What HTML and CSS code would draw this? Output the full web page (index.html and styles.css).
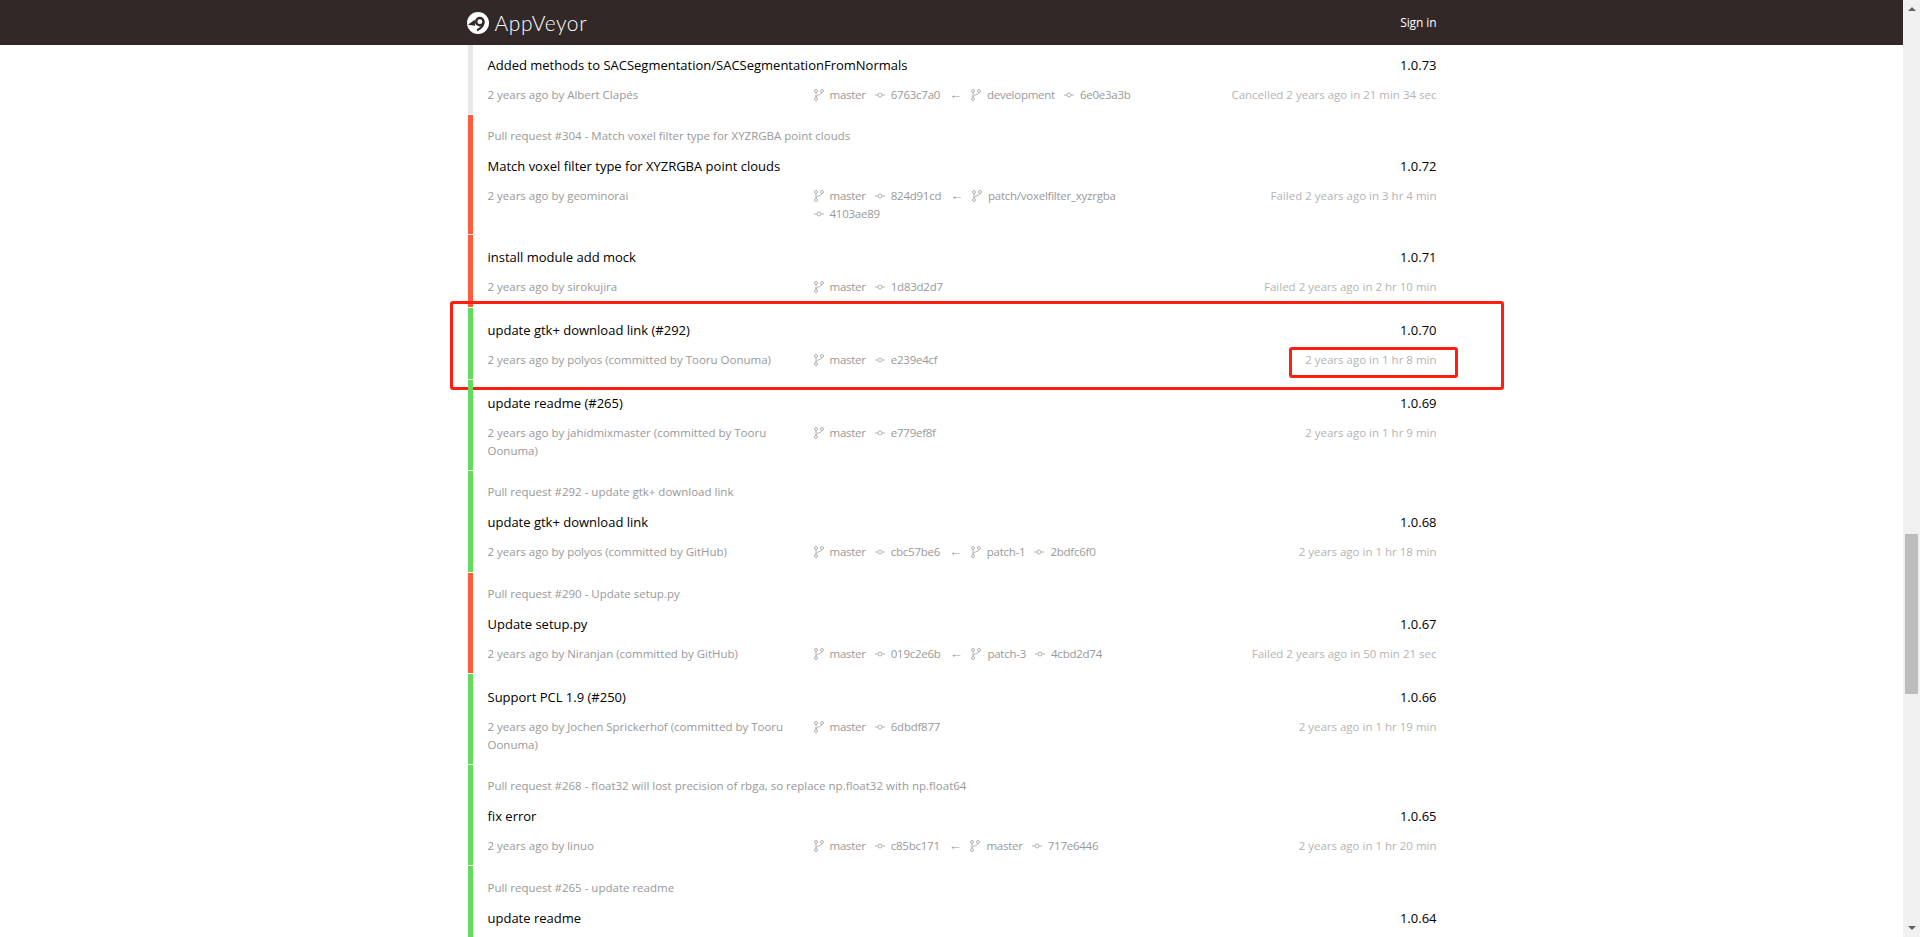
FILE: index.html
```html
<!DOCTYPE html>
<html lang="en">

<head>
    <meta charset="UTF-8">
    <title>AppVeyor - History</title>
    <link rel="stylesheet" href="styles.css">
</head>

<body>
    <svg class="defs" width="0" height="0">
        <symbol id="branch" viewBox="0 0 10 12">
            <circle cx="2" cy="2" r="1.5"/>
            <circle cx="8" cy="2" r="1.5"/>
            <circle cx="2" cy="10" r="1.5"/>
            <path d="M2 3.500v5M8 3.500c0 2.500-6 2-6 4.500"/>
        </symbol>
        <symbol id="commit" viewBox="0 0 10 6">
            <circle cx="5" cy="3" r="2"/>
            <path d="M0 3h3M7 3h3"/>
        </symbol>
    </svg>

    <div class="page">
        <div class="viewport">
            <header class="topbar">
                <div class="topbarInner">
                    <a class="logo">
                        <svg class="logoIcon" viewBox="0 0 24 24">
                            <circle cx="12" cy="12" r="12" fill="#fff"/>
                            <circle cx="14" cy="10.500" r="4" fill="none" stroke="#322828" stroke-width="2.600"/>
                            <path d="M18 11c0 4-3 7-7 9" fill="none" stroke="#322828" stroke-width="2.400"/>
                            <path d="M1 14l7.500-5.500.500 6.500z" fill="#322828"/>
                        </svg>
                        <span class="logoText">AppVeyor</span>
                    </a>
                    <a class="signIn">Sign in</a>
                </div>
            </header>

            <main class="builds">
                <div class="build cancelled">
                    <div class="title"><span>Added methods to SACSegmentation/SACSegmentationFromNormals</span><span>1.0.73</span></div>
                    <div class="meta">
                        <div class="author">2 years ago by Albert Clapés</div>
                        <div class="refs">
                            <span class="ref"><svg class="iconBranch"><use href="#branch"/></svg>master</span>
                            <span class="ref"><svg class="iconCommit"><use href="#commit"/></svg>6763c7a0</span>
                            <span class="ref arrow">←</span>
                            <span class="ref"><svg class="iconBranch"><use href="#branch"/></svg>development</span>
                            <span class="ref"><svg class="iconCommit"><use href="#commit"/></svg>6e0e3a3b</span>
                        </div>
                        <div class="status">Cancelled 2 years ago in 21 min 34 sec</div>
                    </div>
                </div>

                <div class="build failed">
                    <div class="pr">Pull request #304 - Match voxel filter type for XYZRGBA point clouds</div>
                    <div class="title"><span>Match voxel filter type for XYZRGBA point clouds</span><span>1.0.72</span></div>
                    <div class="meta">
                        <div class="author">2 years ago by geominorai</div>
                        <div class="refs">
                            <span class="ref"><svg class="iconBranch"><use href="#branch"/></svg>master</span>
                            <span class="ref"><svg class="iconCommit"><use href="#commit"/></svg>824d91cd</span>
                            <span class="ref arrow">←</span>
                            <span class="ref"><svg class="iconBranch"><use href="#branch"/></svg>patch/voxelfilter_xyzrgba</span>
                            <span class="ref"><svg class="iconCommit"><use href="#commit"/></svg>4103ae89</span>
                        </div>
                        <div class="status">Failed 2 years ago in 3 hr 4 min</div>
                    </div>
                </div>

                <div class="build failed">
                    <div class="title"><span>install module add mock</span><span>1.0.71</span></div>
                    <div class="meta">
                        <div class="author">2 years ago by sirokujira</div>
                        <div class="refs">
                            <span class="ref"><svg class="iconBranch"><use href="#branch"/></svg>master</span>
                            <span class="ref"><svg class="iconCommit"><use href="#commit"/></svg>1d83d2d7</span>
                        </div>
                        <div class="status">Failed 2 years ago in 2 hr 10 min</div>
                    </div>
                </div>

                <div class="build success">
                    <div class="title"><span>update gtk+ download link (#292)</span><span>1.0.70</span></div>
                    <div class="meta">
                        <div class="author">2 years ago by polyos (committed by Tooru Oonuma)</div>
                        <div class="refs">
                            <span class="ref"><svg class="iconBranch"><use href="#branch"/></svg>master</span>
                            <span class="ref"><svg class="iconCommit"><use href="#commit"/></svg>e239e4cf</span>
                        </div>
                        <div class="status">2 years ago in 1 hr 8 min</div>
                    </div>
                    <div class="markRow"></div>
                    <div class="markTime"></div>
                </div>

                <div class="build success">
                    <div class="title"><span>update readme (#265)</span><span>1.0.69</span></div>
                    <div class="meta">
                        <div class="author">2 years ago by jahidmixmaster (committed by Tooru Oonuma)</div>
                        <div class="refs">
                            <span class="ref"><svg class="iconBranch"><use href="#branch"/></svg>master</span>
                            <span class="ref"><svg class="iconCommit"><use href="#commit"/></svg>e779ef8f</span>
                        </div>
                        <div class="status">2 years ago in 1 hr 9 min</div>
                    </div>
                </div>

                <div class="build success">
                    <div class="pr">Pull request #292 - update gtk+ download link</div>
                    <div class="title"><span>update gtk+ download link</span><span>1.0.68</span></div>
                    <div class="meta">
                        <div class="author">2 years ago by polyos (committed by GitHub)</div>
                        <div class="refs">
                            <span class="ref"><svg class="iconBranch"><use href="#branch"/></svg>master</span>
                            <span class="ref"><svg class="iconCommit"><use href="#commit"/></svg>cbc57be6</span>
                            <span class="ref arrow">←</span>
                            <span class="ref"><svg class="iconBranch"><use href="#branch"/></svg>patch-1</span>
                            <span class="ref"><svg class="iconCommit"><use href="#commit"/></svg>2bdfc6f0</span>
                        </div>
                        <div class="status">2 years ago in 1 hr 18 min</div>
                    </div>
                </div>

                <div class="build failed">
                    <div class="pr">Pull request #290 - Update setup.py</div>
                    <div class="title"><span>Update setup.py</span><span>1.0.67</span></div>
                    <div class="meta">
                        <div class="author">2 years ago by Niranjan (committed by GitHub)</div>
                        <div class="refs">
                            <span class="ref"><svg class="iconBranch"><use href="#branch"/></svg>master</span>
                            <span class="ref"><svg class="iconCommit"><use href="#commit"/></svg>019c2e6b</span>
                            <span class="ref arrow">←</span>
                            <span class="ref"><svg class="iconBranch"><use href="#branch"/></svg>patch-3</span>
                            <span class="ref"><svg class="iconCommit"><use href="#commit"/></svg>4cbd2d74</span>
                        </div>
                        <div class="status">Failed 2 years ago in 50 min 21 sec</div>
                    </div>
                </div>

                <div class="build success">
                    <div class="title"><span>Support PCL 1.9 (#250)</span><span>1.0.66</span></div>
                    <div class="meta">
                        <div class="author">2 years ago by Jochen Sprickerhof (committed by Tooru Oonuma)</div>
                        <div class="refs">
                            <span class="ref"><svg class="iconBranch"><use href="#branch"/></svg>master</span>
                            <span class="ref"><svg class="iconCommit"><use href="#commit"/></svg>6dbdf877</span>
                        </div>
                        <div class="status">2 years ago in 1 hr 19 min</div>
                    </div>
                </div>

                <div class="build success">
                    <div class="pr">Pull request #268 - float32 will lost precision of rbga, so replace np.float32 with np.float64</div>
                    <div class="title"><span>fix error</span><span>1.0.65</span></div>
                    <div class="meta">
                        <div class="author">2 years ago by linuo</div>
                        <div class="refs">
                            <span class="ref"><svg class="iconBranch"><use href="#branch"/></svg>master</span>
                            <span class="ref"><svg class="iconCommit"><use href="#commit"/></svg>c85bc171</span>
                            <span class="ref arrow">←</span>
                            <span class="ref"><svg class="iconBranch"><use href="#branch"/></svg>master</span>
                            <span class="ref"><svg class="iconCommit"><use href="#commit"/></svg>717e6446</span>
                        </div>
                        <div class="status">2 years ago in 1 hr 20 min</div>
                    </div>
                </div>

                <div class="build success">
                    <div class="pr">Pull request #265 - update readme</div>
                    <div class="title"><span>update readme</span><span>1.0.64</span></div>
                </div>
            </main>
        </div>

        <div class="scrollbar">
            <div class="arrowUp"></div>
            <div class="thumb"></div>
            <div class="arrowDown"></div>
        </div>
    </div>
</body>

</html>
```

FILE: styles.css
```css
* {
    box-sizing: border-box;
}

html,
body {
    margin: 0;
    height: 100%;
    overflow: hidden;
}

body {
    background: #fff;
    font-family: 'Open Sans', sans-serif;
    color: #000;
}

.defs {
    position: absolute;
}

.page {
    display: flex;
    height: 937px;
}

.viewport {
    flex: 1;
    min-width: 0;
    overflow: hidden;
}

.topbar {
    position: relative;
    z-index: 2;
    height: 45px;
    background: #322828;
}

.topbarInner {
    width: 970px;
    height: 45px;
    margin: 0 auto;
    display: flex;
    align-items: center;
    justify-content: space-between;
}

.logo {
    display: flex;
    align-items: center;
    gap: 6px;
}

.logoIcon {
    width: 22px;
    height: 22px;
}

.logoText {
    font-family: 'Lato', sans-serif;
    font-size: 21px;
    font-weight: 300;
    color: #fff;
    letter-spacing: 0.6px;
}

.signIn {
    font-size: 12px;
    letter-spacing: -0.1px;
    color: #fff;
}

.builds {
    width: 970px;
    margin: -2.55px auto 0;
    padding-left: 1px;
}

.build {
    position: relative;
    border-left: 5px solid #ddd;
    margin-bottom: 1px;
    padding: 12.5px 0 10.35px 15px;
}

.cancelled {
    border-left-color: #e8e8e8;
}

.failed {
    border-left-color: #ff5c3c;
}

.success {
    border-left-color: #62dc5c;
}

.pr {
    font-size: 11.5px;
    line-height: 18px;
    margin: -0.4px 0 11px;
    color: #999;
}

.title {
    display: flex;
    justify-content: space-between;
    font-size: 13px;
    line-height: 20px;
}

.meta {
    display: grid;
    grid-template-columns: 326px 340px 1fr;
    margin-top: 11px;
    font-size: 11.5px;
    line-height: 18px;
    color: #999;
}

.author {
    padding-right: 16px;
}

.refs {
    display: flex;
    flex-wrap: wrap;
    align-content: flex-start;
    column-gap: 9px;
    letter-spacing: -0.25px;
}

.ref {
    display: inline-flex;
    align-items: center;
    white-space: nowrap;
}

.arrow {
    font-family: 'Liberation Sans', sans-serif;
    font-size: 13px;
}

.iconBranch {
    width: 10px;
    height: 12px;
    margin-right: 6px;
    fill: none;
    stroke: #aaa;
    stroke-width: 0.9;
}

.iconCommit {
    width: 10px;
    height: 6px;
    margin-right: 6px;
    fill: none;
    stroke: #aaa;
    stroke-width: 0.9;
}

.status {
    text-align: right;
    color: #b4b4b4;
}

.markRow {
    position: absolute;
    left: -23px;
    top: -6.6px;
    width: 1054px;
    height: 89px;
    border: 3px solid #ff1f10;
    border-radius: 3px;
}

.markTime {
    position: absolute;
    left: 816px;
    top: 39.4px;
    width: 169px;
    height: 31px;
    border: 3px solid #ff1f10;
    border-radius: 3px;
}

.scrollbar {
    position: relative;
    width: 17px;
    background: #f0f0f0;
}

.thumb {
    position: absolute;
    left: 2px;
    top: 534px;
    width: 13px;
    height: 160px;
    background: #bcbcbc;
}

.arrowUp,
.arrowDown {
    position: absolute;
    left: 5px;
    width: 0;
    height: 0;
    border-left: 4px solid transparent;
    border-right: 4px solid transparent;
}

.arrowUp {
    top: 7px;
    border-bottom: 4px solid #606060;
}

.arrowDown {
    bottom: 7px;
    border-top: 4px solid #606060;
}
```
